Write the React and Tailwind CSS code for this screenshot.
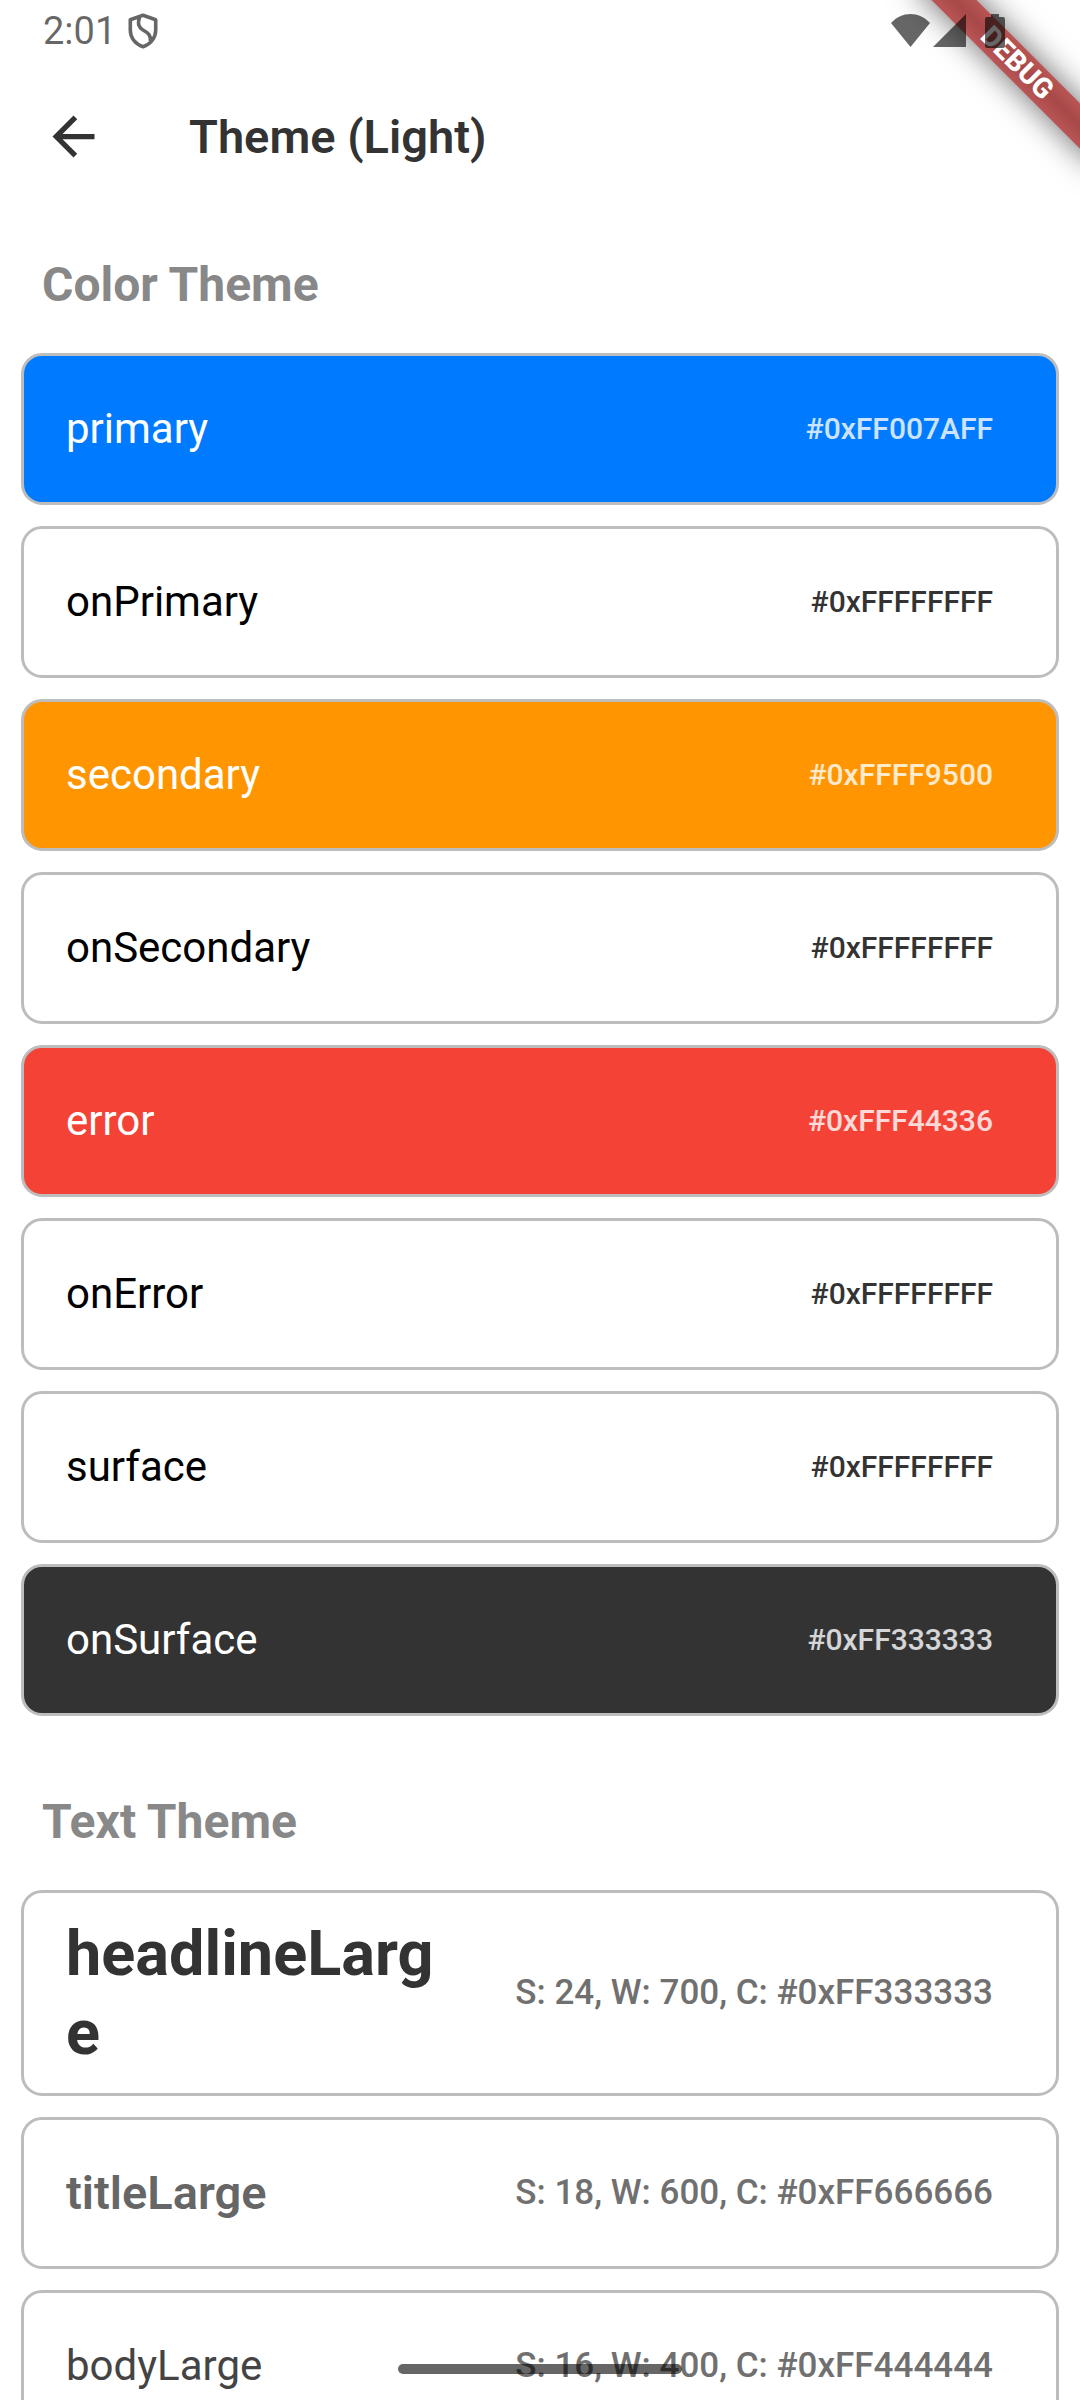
const COLORS = [
  { name: "primary", hex: "#0xFF007AFF", card: "bg-[#007aff]", label: "text-white", value: "text-white/80" },
  { name: "onPrimary", hex: "#0xFFFFFFFF", card: "bg-white", label: "text-black", value: "text-[#333333]" },
  { name: "secondary", hex: "#0xFFFF9500", card: "bg-[#ff9500]", label: "text-white", value: "text-white/80" },
  { name: "onSecondary", hex: "#0xFFFFFFFF", card: "bg-white", label: "text-black", value: "text-[#333333]" },
  { name: "error", hex: "#0xFFF44336", card: "bg-[#f44336]", label: "text-white", value: "text-white/80" },
  { name: "onError", hex: "#0xFFFFFFFF", card: "bg-white", label: "text-black", value: "text-[#333333]" },
  { name: "surface", hex: "#0xFFFFFFFF", card: "bg-white", label: "text-black", value: "text-[#333333]" },
  { name: "onSurface", hex: "#0xFF333333", card: "bg-[#333333]", label: "text-white", value: "text-white/80" },
];

const TEXTS = [
  { name: "headlineLarge", info: "S: 24, W: 700, C: #0xFF333333", label: "text-[63px] leading-[79px] font-bold text-[#333333]" },
  { name: "titleLarge", info: "S: 18, W: 600, C: #0xFF666666", label: "text-[47px] leading-[56px] font-semibold text-[#666666]" },
  { name: "bodyLarge", info: "S: 16, W: 400, C: #0xFF444444", label: "text-[42px] leading-[56px] text-[#444444]" },
];

function StatusBar() {
  return (
    <div className="pointer-events-none relative z-20 flex h-[63px] shrink-0 items-start justify-between pr-[75px] pl-[43px] text-black/60">
      <div className="flex items-center gap-3 pt-2">
        <span className="text-[38px] leading-[46px]">2:01</span>
        <svg viewBox="0 0 30 36" className="h-9 w-[30px]" fill="none" stroke="currentColor" strokeWidth="3.600" aria-hidden="true">
          <path
            d="M15 2.300 L27.700 6.800 V17 C27.700 25 22.500 31 15 33.700 C7.500 31 2.300 25 2.300 17 V6.800 Z M11.500 3.700 C9.500 11 10.500 14 15 17 C20.500 20 23 22.500 22.500 28.500"
            strokeLinejoin="round"
          />
        </svg>
      </div>
      <div className="flex items-start pt-3.5">
        <svg viewBox="0 0 39 33" className="h-[33px] w-[39px]" fill="currentColor" aria-hidden="true">
          <path d="M0 9 C11 -3 28 -3 39 9 L19.500 33 Z" />
        </svg>
        <svg viewBox="0 0 33 33" className="ml-[3px] h-[33px] w-[33px]" fill="currentColor" aria-hidden="true">
          <path d="M33 0 V33 H0 Z" />
        </svg>
        <svg viewBox="0 0 20 34" className="ml-[19px] h-[34px] w-5" fill="currentColor" aria-hidden="true">
          <path d="M6 0 H14 V3 H18 Q20 3 20 5 V32 Q20 34 18 34 H2 Q0 34 0 32 V5 Q0 3 2 3 H6 Z" />
        </svg>
      </div>
    </div>
  );
}

function DebugRibbon() {
  return (
    <div className="pointer-events-none absolute top-0 right-0 z-10 size-[200px] overflow-hidden">
      <div className="absolute top-[47px] left-[7px] flex h-8 w-[260px] rotate-45 items-center justify-center bg-linear-to-b from-[#b95555] via-[#a84848] to-[#b95555] text-[28px] leading-8 font-extrabold text-white shadow-[0_0_32px_0_rgba(0,0,0,0.6)]">
        DEBUG
      </div>
    </div>
  );
}

function Card({ tone, children }) {
  return (
    <li className={`grid min-h-[152px] grid-cols-[2fr_3fr] items-center rounded-[21px] border-3 border-[#bdbdbd] py-[21px] pr-[63px] pl-[42px] ${tone}`}>
      {children}
    </li>
  );
}

function Section({ title, children }) {
  return (
    <section className="flex flex-col gap-10">
      <h2 className="px-[21px] text-[48px] leading-[56px] font-bold text-[#888888]">{title}</h2>
      <ul className="flex flex-col gap-[21px]">{children}</ul>
    </section>
  );
}

export default function App() {
  return (
    <div className="relative flex h-screen flex-col overflow-hidden bg-white font-[Roboto,sans-serif]">
      <StatusBar />
      <DebugRibbon />
      <header className="flex h-[147px] shrink-0 items-center gap-[84px] px-[42px] text-[#333333]">
        <button type="button" aria-label="Back" className="size-[63px]">
          <svg viewBox="0 0 24 24" className="size-full" fill="currentColor" aria-hidden="true">
            <path d="M20 11H7.830l5.590-5.590L12 4l-8 8 8 8 1.410-1.410L7.830 13H20v-2z" />
          </svg>
        </button>
        <h1 className="text-[47px] leading-[56px] font-semibold">Theme (Light)</h1>
      </header>
      <main className="flex min-h-0 flex-1 flex-col gap-[78px] overflow-y-auto px-[21px] pt-[47px] [scrollbar-width:none]">
        <Section title="Color Theme">
          {COLORS.map((c) => (
            <Card key={c.name} tone={c.card}>
              <span className={`text-[42px] leading-[56px] ${c.label}`}>{c.name}</span>
              <span className={`text-right text-[30px] leading-10 font-medium ${c.value}`}>{c.hex}</span>
            </Card>
          ))}
        </Section>
        <Section title="Text Theme">
          {TEXTS.map((t) => (
            <Card key={t.name} tone="bg-white">
              <span className={`break-all ${t.label}`}>{t.name}</span>
              <span className="text-right text-[35px] leading-10 font-medium text-[#707070]">{t.info}</span>
            </Card>
          ))}
        </Section>
      </main>
      <div className="pointer-events-none absolute inset-x-0 bottom-[26px] z-20 flex justify-center">
        <div className="h-2.5 w-[284px] rounded-full bg-black/60" />
      </div>
    </div>
  );
}
